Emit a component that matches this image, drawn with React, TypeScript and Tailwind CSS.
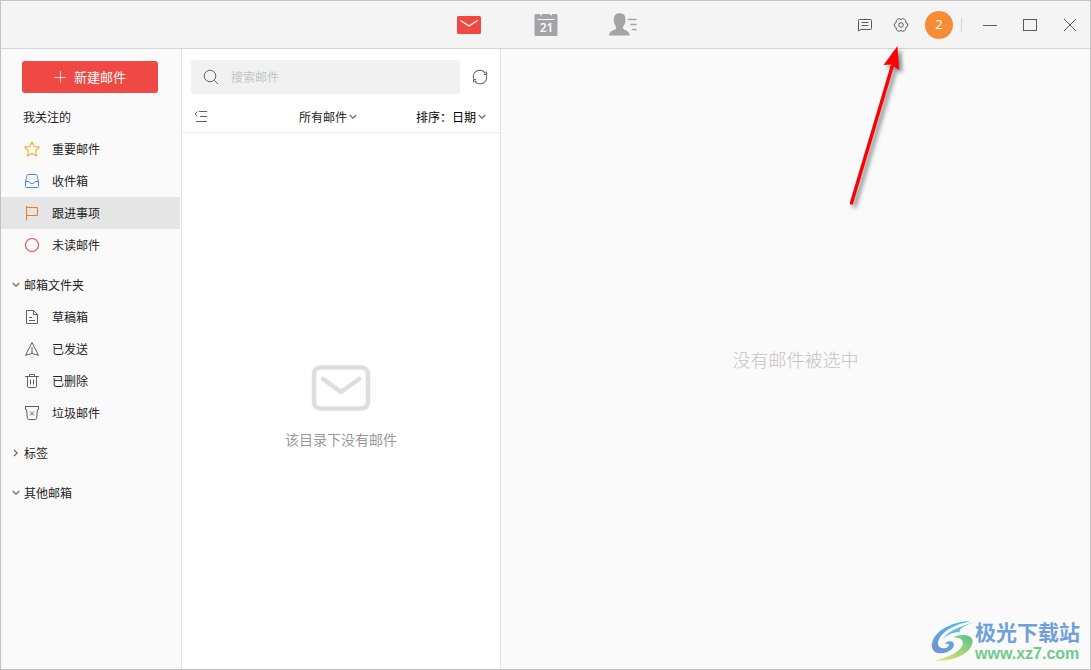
import { useState } from 'react';
import type { ReactNode } from 'react';

type Folder = {
  id: string;
  label: string;
  icon: ReactNode;
};

const iconProps = {
  width: 16,
  height: 16,
  viewBox: '0 0 16 16',
  fill: 'none',
  stroke: 'currentColor',
  'aria-hidden': true,
};

const favorites: Folder[] = [
  {
    id: 'important',
    label: '重要邮件',
    icon: (
      <svg {...iconProps} className="text-[#f9b13c]">
        <path d="M8 .8 10.2 5.5 15.4 6.1 11.6 9.7 12.6 15 8 12.6 3.4 15 4.4 9.7.6 6.1 5.8 5.5Z" strokeWidth="1.2" strokeLinejoin="round" />
      </svg>
    ),
  },
  {
    id: 'inbox',
    label: '收件箱',
    icon: (
      <svg {...iconProps} className="text-[#4a86f0]">
        <path d="M1.5 8.5 3 2.5Q3.2 1.5 4.2 1.5H11.8Q12.8 1.5 13 2.5L14.5 8.5V13.5Q14.5 14.5 13.5 14.5H2.5Q1.5 14.5 1.5 13.5ZM1.5 8.5H5Q5.6 10.6 8 10.6T11 8.5H14.5" />
      </svg>
    ),
  },
  {
    id: 'follow-up',
    label: '跟进事项',
    icon: (
      <svg {...iconProps} className="text-[#ee7c20]">
        <path d="M2.5 1V15.5M2.5 2.5H13.5V10.5H2.5" />
      </svg>
    ),
  },
  {
    id: 'unread',
    label: '未读邮件',
    icon: (
      <svg {...iconProps} className="text-[#ea4747]">
        <circle cx="8" cy="8" r="6.5" strokeWidth="1.1" />
      </svg>
    ),
  },
];

const folders: Folder[] = [
  {
    id: 'drafts',
    label: '草稿箱',
    icon: (
      <svg {...iconProps}>
        <path d="M2.5 1.5H9.5L13.5 5.5V14.5H2.5ZM9.5 1.5V5.5H13.5M5 8.5H8M5 11.5H11" strokeLinejoin="round" />
      </svg>
    ),
  },
  {
    id: 'sent',
    label: '已发送',
    icon: (
      <svg {...iconProps}>
        <path d="M8 1.5 14.5 14.3 8 12.5 1.5 14.3ZM8 6V12.5" />
      </svg>
    ),
  },
  {
    id: 'deleted',
    label: '已删除',
    icon: (
      <svg {...iconProps}>
        <path d="M1 3.5H15M5.5 3.5V1.5H10.5V3.5M3.5 3.5V13.5Q3.5 14.5 4.5 14.5H11.5Q12.5 14.5 12.5 13.5V3.5M6.5 6.5V11.5M9.5 6.5V11.5" />
      </svg>
    ),
  },
  {
    id: 'spam',
    label: '垃圾邮件',
    icon: (
      <svg {...iconProps}>
        <path d="M1 1.5H15M1.5 1.5V4.5H2.5L3.5 13.5Q3.6 14.5 4.5 14.5H11.5Q12.4 14.5 12.5 13.5L13.5 4.5H14.5V1.5M6 6.5 10 10.5M10 6.5 6 10.5" />
      </svg>
    ),
  },
];

function Chevron({ className = '' }: { className?: string }) {
  return (
    <svg
      width="8"
      height="8"
      viewBox="0 0 8 8"
      fill="none"
      stroke="#666"
      strokeWidth="1.2"
      className={className}
      aria-hidden="true"
    >
      <path d="M.8 2 4 5.2 7.2 2" />
    </svg>
  );
}

function FolderRow({
  folder,
  isActive,
  onSelect,
}: {
  folder: Folder;
  isActive: boolean;
  onSelect: (id: string) => void;
}) {
  return (
    <li>
      <button
        onClick={() => onSelect(folder.id)}
        className={`flex h-8 w-full items-center gap-3 pl-[23px] text-left text-[#5f5f5f] ${
          isActive ? 'bg-[#e5e5e5]' : 'hover:bg-[#efefef]'
        }`}
      >
        {folder.icon}
        <span className="text-[#222]">{folder.label}</span>
      </button>
    </li>
  );
}

function SectionToggle({
  label,
  isOpen,
  onToggle,
}: {
  label: string;
  isOpen: boolean;
  onToggle: () => void;
}) {
  return (
    <button
      onClick={onToggle}
      aria-expanded={isOpen}
      className="mt-2 flex h-8 w-full items-center gap-1 pl-[11px] text-left"
    >
      <Chevron className={isOpen ? '' : '-rotate-90'} />
      {label}
    </button>
  );
}

function TitleBar() {
  return (
    <header className="grid h-12 grid-cols-[1fr_auto_1fr] items-center border-b border-[#d5d5d5] bg-[#f4f4f4] text-[#5a5a5a]">
      <nav className="col-start-2 flex">
        <button aria-label="邮件" className="flex w-[77px] justify-center">
          <svg width="24" height="26" viewBox="0 0 24 26">
            <rect y="4" width="24" height="18" rx="1.5" fill="#f04843" />
            <path d="M3.5 8.5 12 14 20.5 8.5" fill="none" stroke="#fff" strokeWidth="1.4" />
          </svg>
        </button>
        <button aria-label="日历" className="flex w-[77px] justify-center">
          <svg width="24" height="26" viewBox="0 0 24 26">
            <path
              d="M2 2H6V3.2H8V2H16V3.2H18V2H22Q23.5 2 23.5 3.5V22.5Q23.5 24 22 24H2Q.5 24 .5 22.5V3.5Q.5 2 2 2Z"
              fill="#a2a4a5"
            />
            <path d="M3.5 7.5H20.5" stroke="#f4f4f4" />
            <text
              x="12.5"
              y="20"
              textAnchor="middle"
              fill="#fff"
              className="font-['Open_Sans',sans-serif] text-[12px] font-semibold"
            >
              21
            </text>
          </svg>
        </button>
        <button aria-label="联系人" className="flex w-[77px] justify-center">
          <svg width="28" height="26" viewBox="0 0 28 26">
            <path
              d="M10.5 1.2C14 .8 16.4 3 16.3 6.5 16.3 8.5 16.8 9.5 15.8 11.5 15.3 13.5 13.8 14 13.9 16 14 18.2 20.5 18 20.8 23.5H0C.3 18 7.2 18.4 7.2 16 7.2 14 5.5 13 5.2 11 4.2 9 5 7.5 5 6 5.2 3 7.5 1 10.5 1.2Z"
              fill="#a2a4a5"
            />
            <path d="M19.5 7.5H27M22 12.5H27M23.5 17.5H27" stroke="#a2a4a5" strokeWidth="1.6" strokeLinecap="round" />
          </svg>
        </button>
      </nav>
      <div className="flex items-center justify-end">
        <button aria-label="反馈" className="flex w-9 justify-center">
          <svg {...iconProps}>
            <path d="M2.5 2.5H13.5Q14.5 2.5 14.5 3.5V11.5Q14.5 12.5 13.5 12.5H4L1.5 14V3.5Q1.5 2.5 2.5 2.5ZM4.5 5.5H11.5M4.5 8.5H11.5" />
          </svg>
        </button>
        <button aria-label="设置" className="flex w-9 justify-center">
          <svg {...iconProps}>
            <path
              d="M8 2.6A2.8 2.8 0 0 1 12.7 5.3A2.8 2.8 0 0 1 12.7 10.7A2.8 2.8 0 0 1 8 13.4A2.8 2.8 0 0 1 3.3 10.7A2.8 2.8 0 0 1 3.3 5.3A2.8 2.8 0 0 1 8 2.6Z"
              strokeLinejoin="round"
            />
            <circle cx="8" cy="8" r="2.3" />
          </svg>
        </button>
        <button className="ml-1.5 size-7 rounded-full bg-[#f78c37] font-['Open_Sans',sans-serif] text-[13px] text-white">
          2
        </button>
        <span className="mx-2 h-3.5 w-px bg-[#d5d5d5]" />
        <button aria-label="最小化" className="flex w-10 justify-center">
          <svg {...iconProps}>
            <path d="M1 8.5H15" />
          </svg>
        </button>
        <button aria-label="最大化" className="flex w-10 justify-center">
          <svg {...iconProps}>
            <rect x="1.5" y="2.5" width="13" height="11" />
          </svg>
        </button>
        <button aria-label="关闭" className="flex w-10 justify-center">
          <svg {...iconProps}>
            <path d="M2 2 14 14M14 2 2 14" />
          </svg>
        </button>
      </div>
    </header>
  );
}

function Sidebar() {
  const [activeId, setActiveId] = useState('follow-up');
  const [openSections, setOpenSections] = useState({
    folders: true,
    tags: false,
    others: true,
  });

  const toggle = (key: keyof typeof openSections) => {
    setOpenSections((prev) => ({ ...prev, [key]: !prev[key] }));
  };

  return (
    <aside className="w-[181px] shrink-0 border-r border-[#e3e3e3] bg-[#fafafa] pt-3 pr-px">
      <button className="mr-[22px] ml-[21px] flex h-8 w-[136px] items-center justify-center gap-2 rounded-[3px] bg-[#f04843] text-[13px] text-white">
        <svg width="12" height="12" viewBox="0 0 12 12" stroke="#fff" strokeOpacity=".75" aria-hidden="true">
          <path d="M0 6.5H12M6.5 0V12" />
        </svg>
        新建邮件
      </button>
      <h2 className="mt-2 flex h-8 items-center pl-[22px]">我关注的</h2>
      <ul>
        {favorites.map((folder) => (
          <FolderRow key={folder.id} folder={folder} isActive={folder.id === activeId} onSelect={setActiveId} />
        ))}
      </ul>
      <SectionToggle label="邮箱文件夹" isOpen={openSections.folders} onToggle={() => toggle('folders')} />
      {openSections.folders && (
        <ul>
          {folders.map((folder) => (
            <FolderRow key={folder.id} folder={folder} isActive={folder.id === activeId} onSelect={setActiveId} />
          ))}
        </ul>
      )}
      <SectionToggle label="标签" isOpen={openSections.tags} onToggle={() => toggle('tags')} />
      <SectionToggle label="其他邮箱" isOpen={openSections.others} onToggle={() => toggle('others')} />
    </aside>
  );
}

function MailList() {
  return (
    <section className="flex w-[319px] shrink-0 flex-col border-r border-[#e3e3e3] bg-white">
      <div className="flex items-center pt-[11px] pl-[9px]">
        <label className="flex h-[34px] w-[269px] items-center gap-3 rounded-[3px] bg-[#f1f1f1] pl-3 text-[#666]">
          <svg {...iconProps} className="shrink-0">
            <circle cx="7" cy="7" r="5.8" />
            <path d="M11.2 11.2 15 15" />
          </svg>
          <input
            type="search"
            placeholder="搜索邮件"
            aria-label="搜索邮件"
            className="min-w-0 flex-1 bg-transparent outline-none placeholder:text-[#c3c5c8]"
          />
        </label>
        <button aria-label="刷新" className="flex w-10 justify-center text-[#5f5f5f]">
          <svg {...iconProps}>
            <path d="M1.6 9.6A6.5 6.5 0 0 1 13.4 4.4M14.4 6.4A6.5 6.5 0 0 1 2.6 11.6" strokeWidth="1.1" />
            <path d="M14.5 2.5V5.5H12M1.5 13.5V10.5H4" />
          </svg>
        </button>
      </div>
      <div className="flex h-[39px] items-center border-b border-[#ebebeb] pt-3 pr-3.5 pb-1 pl-3">
        <button aria-label="收起列表" className="text-[#5f5f5f]">
          <svg width="14" height="14" viewBox="0 0 14 14" fill="none" stroke="currentColor">
            <path d="M5 1.5H13M6 6.5H13M2 11.5H13M3.5 1.5 1 4 3.5 6.5" />
          </svg>
        </button>
        <div className="ml-[91px] flex items-center">
          <select aria-label="筛选" className="field-sizing-content appearance-none bg-transparent text-[#222]">
            <option>所有邮件</option>
          </select>
          <Chevron className="ml-0.5" />
        </div>
        <div className="ml-auto flex items-center text-black">
          <label htmlFor="sort">排序：</label>
          <select id="sort" className="field-sizing-content appearance-none bg-transparent">
            <option>日期</option>
          </select>
          <Chevron className="ml-0.5" />
        </div>
      </div>
      <div className="flex flex-1 flex-col items-center justify-center gap-4.5 pt-3">
        <svg width="60" height="46" viewBox="0 0 60 46" fill="none" stroke="#dedede" aria-hidden="true">
          <rect x="3" y="2.5" width="54" height="41" rx="6.5" strokeWidth="4.6" />
          <path d="M12 14 30 27 48 14" strokeWidth="4.6" strokeLinecap="round" strokeLinejoin="round" />
        </svg>
        <p className="text-sm leading-5 text-[#999]">该目录下没有邮件</p>
      </div>
    </section>
  );
}

function Pointer() {
  return (
    <svg
      width="80"
      height="180"
      viewBox="0 0 80 180"
      className="pointer-events-none absolute top-[39px] right-[170px] drop-shadow-[3px_3px_2px_rgba(0,0,0,0.5)]"
      aria-hidden="true"
    >
      <path d="M11.5 163 52 27" stroke="#fe0000" strokeWidth="3.4" strokeLinecap="round" />
      <path d="M57.5 6 43.5 25 51 24.5 59 30Z" fill="#fe0000" />
    </svg>
  );
}

function SiteMark() {
  return (
    <div className="absolute right-2.5 bottom-1.5 flex items-center">
      <svg width="44" height="44" viewBox="48 54 132 132" aria-hidden="true">
        <defs>
          <linearGradient id="mark-blue" x1="0" y1="1" x2="1" y2="0">
            <stop offset="0" stopColor="#6f92cf" />
            <stop offset="1" stopColor="#4fbdf0" />
          </linearGradient>
          <linearGradient id="mark-green" x1="0" y1="1" x2="1" y2="0">
            <stop offset="0" stopColor="#f2e56b" />
            <stop offset="1" stopColor="#55c48b" />
          </linearGradient>
        </defs>
        <path
          d="M168 61C120 60 62 84 51 126 46 150 66 160 86 156 108 152 122 136 115 125 108 118 92 120 90 130 96 126 104 128 101 134 96 144 72 146 69 130 68 98 116 70 168 61Z"
          fill="url(#mark-blue)"
        />
        <path
          d="M180 62C136 76 96 90 82 116 98 98 122 92 134 94 132 80 154 72 180 62Z"
          fill="#64b9e8"
        />
        <path
          d="M116 108C138 98 174 100 173 122 168 160 112 182 58 179 86 172 132 158 143 132 147 116 132 109 116 108Z"
          fill="url(#mark-green)"
        />
      </svg>
      <div>
        <p className="text-[21px] leading-[27px] font-bold text-[#6fa0db]">极光下载站</p>
        <p className="font-['Liberation_Sans',sans-serif] text-[16px] leading-[18px] font-bold text-[#6fca90]">
          www.xz7.com
        </p>
      </div>
    </div>
  );
}

export default function App() {
  return (
    <div className="relative flex min-h-screen flex-col border border-[#c3c3c3] bg-[#fafafa] font-['Noto_Sans_CJK_SC',sans-serif] text-xs text-[#222]">
      <TitleBar />
      <div className="flex flex-1">
        <Sidebar />
        <MailList />
        <main className="flex flex-1 items-center justify-center">
          <p className="text-lg font-light text-[#c4c4c4]">没有邮件被选中</p>
        </main>
      </div>
      <Pointer />
      <SiteMark />
    </div>
  );
}
